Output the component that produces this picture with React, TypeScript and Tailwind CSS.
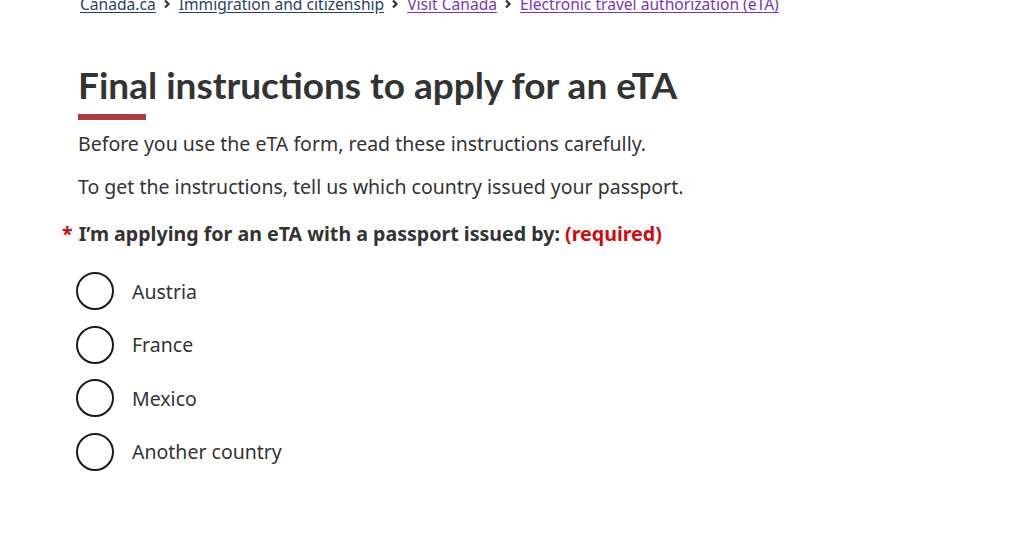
import React from 'react';

const crumbs = [
  { label: 'Canada.ca', visited: false },
  { label: 'Immigration and citizenship', visited: false },
  { label: 'Visit Canada', visited: true },
  { label: 'Electronic travel authorization (eTA)', visited: true },
];

const countries = ['Austria', 'France', 'Mexico', 'Another country'];

const App = () => {
  return (
    <div className="min-h-[541px] bg-white text-[#333] overflow-hidden" style={{ fontFamily: '"Noto Sans", sans-serif' }}>
      {/* Fil d'Ariane */}
      <nav className="mt-[-7px] pl-[80px]">
        <ol className="flex items-center text-[15.6px] leading-[22px]">
          {crumbs.map((c, i) => (
            <li key={c.label} className="flex items-center">
              {i > 0 && (
                <svg className="ml-[7px] mr-[8px] w-[8px] h-[10px] text-[#333]" viewBox="0 0 8 10" fill="none">
                  <path d="M2 1.5 L5.5 5 L2 8.5" stroke="currentColor" strokeWidth="2.2" />
                </svg>
              )}
              <a
                href="#"
                className={
                  c.visited
                    ? 'text-[#7834bc] underline underline-offset-[2px]'
                    : 'text-[#284162] underline underline-offset-[2px]'
                }
              >
                {c.label}
              </a>
            </li>
          ))}
        </ol>
      </nav>

      <main className="pl-[78px] pt-[49px]">
        <h1
          className="text-[37px] leading-[42px] font-bold text-[#333]"
          style={{ fontFamily: 'Lato, sans-serif' }}
        >
          Final instructions to apply for an eTA
        </h1>
        <div className="mt-[8px] w-[68px] h-[6px] bg-[#af3c43]" />

        <p className="mt-[7px] text-[19.5px] leading-[33px]">
          Before you use the eTA form, read these instructions carefully.
        </p>
        <p className="mt-[10px] text-[19.5px] leading-[33px]">
          To get the instructions, tell us which country issued your passport.
        </p>

        <fieldset className="mt-[14px]">
          <legend className="-ml-[16px] text-[19.6px] leading-[33px] font-bold">
            <span className="text-[#d3080c] mr-[6px]">*</span>
            I’m applying for an eTA with a passport issued by:{' '}
            <span className="text-[#d3080c]">(required)</span>
          </legend>

          <div className="mt-[22px] flex flex-col gap-[15.6px] -ml-[2px]">
            {countries.map((c) => (
              <label key={c} className="flex items-center h-[38px] cursor-pointer">
                <span className="w-[38px] h-[38px] rounded-full border-2 border-[#1a1a1a] bg-white shrink-0" />
                <span className="ml-[18px] text-[19.5px] leading-[33px] text-[#333]">{c}</span>
              </label>
            ))}
          </div>
        </fieldset>
      </main>
    </div>
  );
};

export default App;
